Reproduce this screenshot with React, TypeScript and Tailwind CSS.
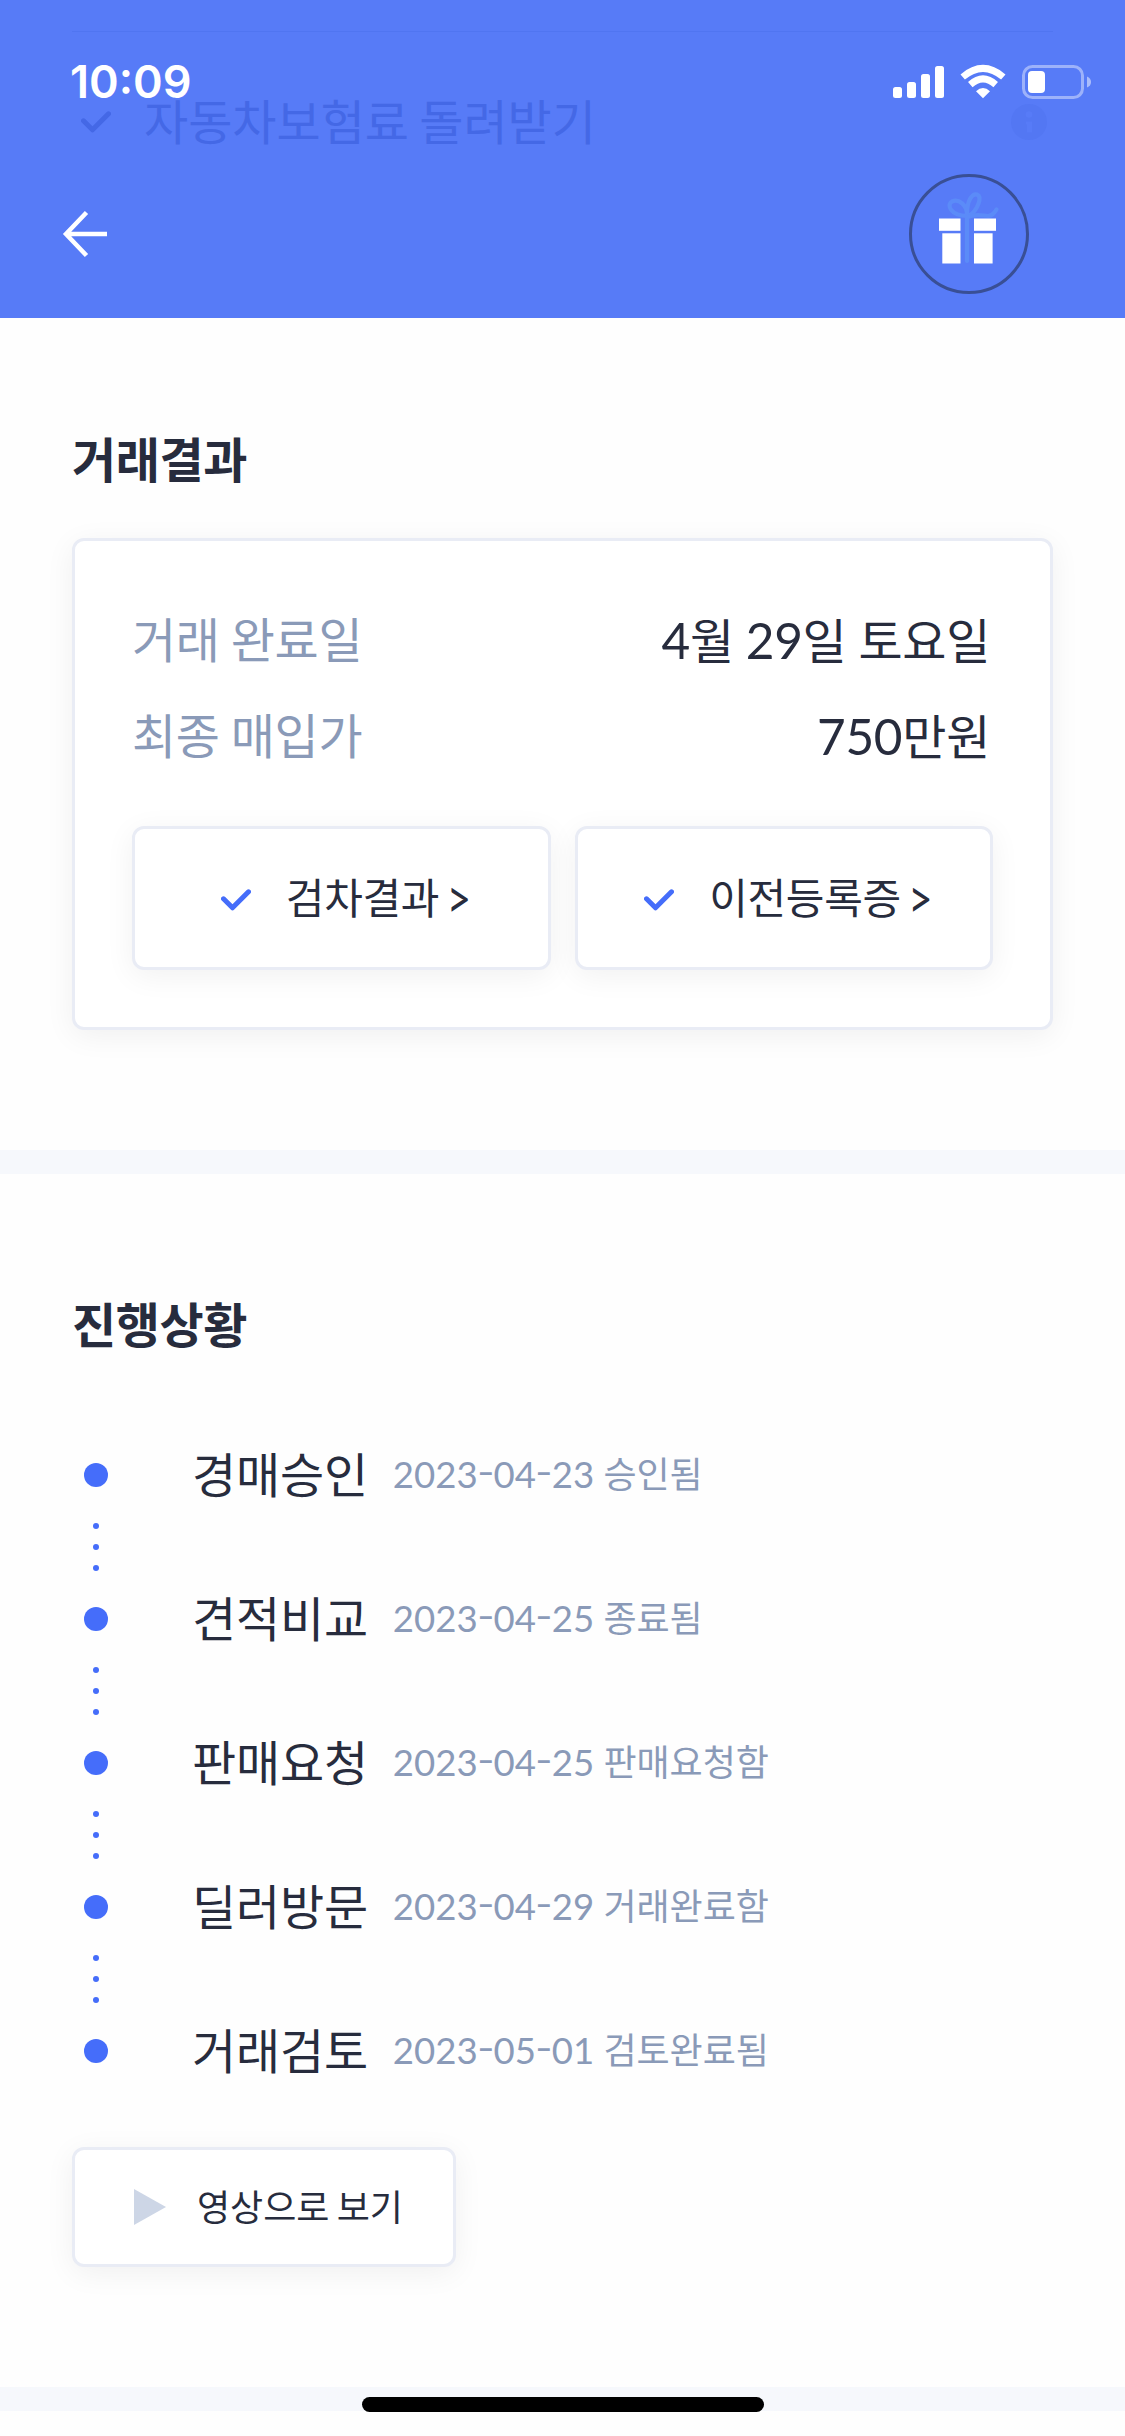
import React from "react";

const steps = [
  { title: "경매승인", date: "2023-04-23", note: "승인됨" },
  { title: "견적비교", date: "2023-04-25", note: "종료됨" },
  { title: "판매요청", date: "2023-04-25", note: "판매요청함" },
  { title: "딜러방문", date: "2023-04-29", note: "거래완료함" },
  { title: "거래검토", date: "2023-05-01", note: "검토완료됨" },
];

function Check({ className }: { className: string }) {
  return (
    <svg className={className} width="30" height="22" viewBox="0 0 30 22" fill="none" stroke="currentColor" strokeWidth="5" strokeLinecap="round" strokeLinejoin="round">
      <path d="M2.5 9.8 11.5 18.8 27.5 2.8" />
    </svg>
  );
}

function StatusIcons() {
  return (
    <svg width="200" height="36" viewBox="892 64 200 36" className="shrink-0">
      <g fill="#fff">
        <rect x="893" y="87" width="9" height="11" rx="2.5" />
        <rect x="907" y="82" width="9" height="16" rx="2.5" />
        <rect x="921" y="74" width="9" height="24" rx="2.5" />
        <rect x="935" y="66" width="9" height="32" rx="2.5" />
        <rect x="1028" y="71" width="17" height="22" rx="4" />
        <path d="M983 98.200 976 91.2Q983 84.600 990 91.2Z" />
      </g>
      <g fill="none" stroke="#fff" strokeWidth="6.8">
        <path d="M970.3 84.6Q983 73.2 995.7 84.6" />
        <path d="M962.7 77Q983 59.8 1003.3 77" />
      </g>
      <rect x="1023.5" y="66.5" width="59" height="31" rx="9" fill="none" stroke="#fff" strokeOpacity=".42" strokeWidth="3" />
      <path d="M1087 76.5Q1091 78 1091 82T1087 87.500Z" fill="#fff" fillOpacity=".5" />
    </svg>
  );
}

function Gift() {
  return (
    <svg width="120" height="120" viewBox="909 174 120 120" className="shrink-0">
      <circle cx="969" cy="234" r="58.500" fill="none" stroke="#394f95" strokeWidth="3" />
      <g fill="none" stroke="#5b8bf8" strokeWidth="4.200" strokeLinecap="round" strokeLinejoin="round">
        <path d="M967 217V261" />
        <path d="M967 216C951 216 946 205 952 201.500C959 198 967 206 967 214C967 201 972 193 977 194.500C983 197 977 211 969 216" />
        <path d="M967 217C978 213 983 216 988 216C993 215.500 994 213 996.500 209.500" />
      </g>
      <g fill="#fff">
        <rect x="939" y="218.500" width="21.500" height="12.300" />
        <rect x="974" y="218.500" width="22" height="12.300" />
        <rect x="942.300" y="233.300" width="18.200" height="30.200" />
        <rect x="974" y="233.300" width="18.600" height="30.200" />
      </g>
    </svg>
  );
}

function Header() {
  return (
    <header className="relative h-[318px] bg-[#577bf7]">
      <div className="absolute inset-x-[72px] top-[31px] border-t border-[#5075f1]">
        <div className="flex h-[180px] items-center justify-between pl-[9px] pr-[6px] text-[#4468e6]">
          <div className="flex items-center gap-[33px]">
            <Check className="" />
            <span className="text-[48px] leading-[72px] [word-spacing:-2px]">자동차보험료 돌려받기</span>
          </div>
          <svg width="36" height="36" viewBox="0 0 36 36">
            <circle cx="18" cy="18" r="18" fill="#5377f3" />
            <circle cx="18" cy="10.500" r="3.300" fill="#577bf7" />
            <path d="M15 17.500h6v11h-5v-8h-1z" fill="#577bf7" />
          </svg>
        </div>
      </div>
      <div className="relative flex h-[150px] items-center justify-between pl-[70px] pr-[33px] pt-[14px]">
        <span className="font-['Inter'] text-[45px] font-semibold leading-[60px] text-white">10:09</span>
        <StatusIcons />
      </div>
      <div className="relative flex h-[168px] items-center justify-between pl-[62px] pr-[96px]">
        <svg width="46" height="48" viewBox="0 0 46 48" fill="none" stroke="#fff" strokeWidth="4.500" className="shrink-0">
          <path d="M24.500 2.500 4 24 24.500 45.500M4 24H45" />
        </svg>
        <Gift />
      </div>
    </header>
  );
}

const card = "rounded-[12px] border-[3px] border-[#e9ecf5] bg-white shadow-[0_6px_30px_rgba(0,0,0,0.06)]";

/* Digits are set slightly larger than the Hangul beside them */
function Value({ text }: { text: string }) {
  return (
    <span>
      {text.split(/(\d+)/).map((part, i) =>
        i % 2 ? <span key={i} className="text-[49.5px]">{part}</span> : part,
      )}
    </span>
  );
}

function Row({ label, value }: { label: string; value: string }) {
  return (
    <div className="flex h-24 items-center justify-between pr-[3px] text-[48px] leading-[72px] tracking-[-0.3px]">
      <span className="text-[#8a9ab8] [word-spacing:-1px]">{label}</span>
      <Value text={value} />
    </div>
  );
}

function DateText({ date }: { date: string }) {
  return (
    <span className="text-[36.6px]">
      {date.split("-").map((part, i) => (
        <React.Fragment key={i}>
          {i > 0 && <span className="relative -top-[3px] inline-block scale-x-130 px-[1.1px]">-</span>}
          {part}
        </React.Fragment>
      ))}
    </span>
  );
}

function LinkButton({ label }: { label: string }) {
  return (
    <button className={`${card} flex h-36 items-center justify-center pl-[9px] text-[42px] leading-[60px]`}>
      <Check className="mr-[35px] mt-[3px] text-[#456dfa]" />
      <span className="tracking-[-0.3px]">
        {label} <span className="relative -top-px -ml-[3px] inline-block scale-y-130">&gt;</span>
      </span>
    </button>
  );
}

export default function App() {
  return (
    <div className="h-[2436px] w-[1125px] overflow-hidden bg-[#fefefe] font-['Lato','Noto_Sans_CJK_KR',sans-serif] text-[#272c3d]">
      <Header />
      <section className="h-[832px] px-[72px] pt-[106px]">
        <h2 className="text-[48px] font-bold leading-[72px] tracking-[-0.4px]">거래결과</h2>
        <div className={`${card} mt-[42px] h-[492px] px-[57px] pt-[51px]`}>
          <Row label="거래 완료일" value="4월 29일 토요일" />
          <Row label="최종 매입가" value="750만원" />
          <div className="mt-[42px] grid grid-cols-2 gap-6">
            <LinkButton label="검차결과" />
            <LinkButton label="이전등록증" />
          </div>
        </div>
      </section>
      <div className="h-6 bg-[#f6f8fc]" />
      <section className="h-[1213px] px-[72px] pt-[115px]">
        <h2 className="text-[48px] font-bold leading-[72px] tracking-[-0.4px]">진행상황</h2>
        <ol className="mt-[42px]">
          {steps.map((s, i) => (
            <li key={s.title} className="flex h-36 pl-3">
              <div className="flex w-6 flex-col items-center pt-[60px]">
                <span className="h-6 w-6 shrink-0 rounded-full bg-[#456dfa]" />
                {i < steps.length - 1 && (
                  <span className="mt-9 flex flex-col gap-[15px]">
                    <span className="h-1.5 w-1.5 rounded-full bg-[#456dfa]" />
                    <span className="h-1.5 w-1.5 rounded-full bg-[#456dfa]" />
                    <span className="h-1.5 w-1.5 rounded-full bg-[#456dfa]" />
                  </span>
                )}
              </div>
              <div className="ml-[84px] flex items-center">
                <span className="text-[48px] leading-[72px] tracking-[-0.2px]">{s.title}</span>
                <span className="mb-[3px] ml-[25px] text-[36px] leading-[54px] text-[#8a9ab8]">
                  <DateText date={s.date} /> {s.note}
                </span>
              </div>
            </li>
          ))}
        </ol>
        <button className={`${card} mt-[24px] flex h-[120px] w-[384px] items-center pl-[59px] text-[36px] leading-[54px] [word-spacing:-2px]`}>
          <svg width="32" height="36" viewBox="0 0 32 36" className="mr-[31px]">
            <path d="M0 0 32 18 0 36Z" fill="#cdd6e6" />
          </svg>
          영상으로 보기
        </button>
      </section>
      <footer className="flex flex-col">
        <div className="flex h-6 justify-center bg-[#f6f8fc] pt-2.5">
          <div className="z-10 h-[15px] w-[402px] shrink-0 rounded-full bg-black" />
        </div>
      </footer>
    </div>
  );
}
